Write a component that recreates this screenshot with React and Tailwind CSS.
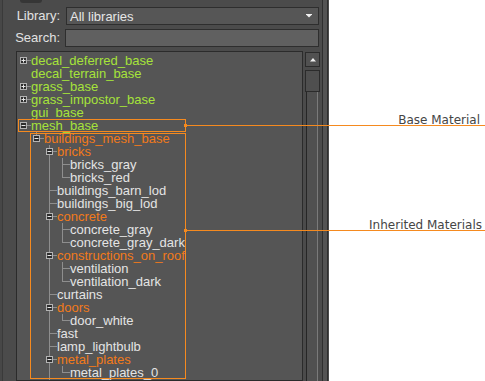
import React from 'react'

const tree = [
  { n: 'decal_deferred_base', c: 'g', closed: true },
  { n: 'decal_terrain_base', c: 'g' },
  { n: 'grass_base', c: 'g', closed: true },
  { n: 'grass_impostor_base', c: 'g', closed: true },
  { n: 'gui_base', c: 'g' },
  {
    n: 'mesh_base', c: 'g', kids: [
      {
        n: 'buildings_mesh_base', c: 'o', kids: [
          { n: 'bricks', c: 'o', kids: [{ n: 'bricks_gray' }, { n: 'bricks_red' }] },
          { n: 'buildings_barn_lod' },
          { n: 'buildings_big_lod' },
          { n: 'concrete', c: 'o', kids: [{ n: 'concrete_gray' }, { n: 'concrete_gray_dark' }] },
          { n: 'constructions_on_roof', c: 'o', kids: [{ n: 'ventilation' }, { n: 'ventilation_dark' }] },
          { n: 'curtains' },
          { n: 'doors', c: 'o', kids: [{ n: 'door_white' }] },
          { n: 'fast' },
          { n: 'lamp_lightbulb' },
          { n: 'metal_plates', c: 'o', kids: [{ n: 'metal_plates_0' }] },
          { n: 'plastic_tiles', c: 'o', closed: true },
        ]
      },
    ]
  },
]

function flatten(nodes, level = 0, guides = [], out = []) {
  nodes.forEach((node, i) => {
    const last = i === nodes.length - 1
    out.push({ node, level, guides, last })
    if (node.kids) flatten(node.kids, level + 1, [...guides, !last], out)
  })
  return out
}

const rows = flatten(tree)

const textColor = { g: 'text-[#a6e33a]', o: 'text-[#f27a1a]', w: 'text-[#e4e4e4]' }

function Expander({ open }) {
  return (
    <svg className="absolute left-[2px] top-[3px]" width="7" height="7" viewBox="0 0 7 7">
      <rect x="0.5" y="0.5" width="6" height="6" fill="#2e2e2e" stroke="#b4b4b4" />
      <line x1="1.5" y1="3.5" x2="5.5" y2="3.5" stroke="#e6e6e6" />
      {!open && <line x1="3.5" y1="1.5" x2="3.5" y2="5.5" stroke="#e6e6e6" />}
    </svg>
  )
}

function Row({ row }) {
  const { node, level, guides, last } = row
  const expandable = node.kids || node.closed
  const cells = []
  for (let k = 0; k < level; k++) {
    cells.push(
      <div key={k} className="relative w-[13px] h-[13px] shrink-0">
        {k >= 1 && guides[k] && <div className="absolute left-[5px] top-0 bottom-0 w-px bg-[#8e8e8e]" />}
      </div>
    )
  }
  return (
    <div className="flex h-[13px]">
      {cells}
      <div className="relative w-[13px] h-[13px] shrink-0">
        {level >= 1 && <div className="absolute left-[5px] top-0 h-[7px] w-px bg-[#8e8e8e]" />}
        {level >= 1 && !last && <div className="absolute left-[5px] top-[6px] bottom-0 w-px bg-[#8e8e8e]" />}
        {(level >= 1 || expandable) && <div className="absolute left-[5px] top-[6px] w-[8px] h-px bg-[#8e8e8e]" />}
        {expandable && <Expander open={!!node.kids} />}
      </div>
      <span className={`text-[13px] leading-[13px] whitespace-nowrap ${textColor[node.c || 'w']}`}>{node.n}</span>
    </div>
  )
}

export default function App() {
  return (
    <div className="relative flex w-[485px] h-[381px] overflow-hidden bg-white" style={{ fontFamily: '"Liberation Sans", Arial, sans-serif' }}>
      {/* editor panel */}
      <div className="flex h-full shrink-0 bg-[#4b4b4b]">
        <div className="w-[2px] bg-[#474747]" />
        <div className="w-px bg-[#3a3a3a]" />
        <div className="relative w-[319px] flex flex-col pt-[7px]">
          <div className="absolute left-[17px] top-0 w-[22px] h-[3px] rounded-b-[3px] bg-[#363636]" />
          <div className="flex items-center h-[18px]">
            <span className="w-[57px] text-right text-[13px] text-[#e2e2e2]">Library:</span>
            <div className="ml-[6px] w-[253px] h-[18px] flex items-center justify-between pl-[3px] pr-[6px] border border-[#2e2e2e] bg-[#565656]">
              <span className="text-[13px] text-[#e6e6e6] leading-none">All libraries</span>
              <svg width="6" height="4" viewBox="0 0 6 4">
                <rect x="0" y="0" width="6" height="1" fill="#f0f0f0" />
                <polygon points="0.5,1 5.5,1 3,3.5" fill="#f0f0f0" />
              </svg>
            </div>
          </div>
          <div className="flex items-center h-[18px] mt-[4px]">
            <span className="w-[57px] text-right text-[13px] text-[#e2e2e2]">Search:</span>
            <div className="ml-[5px] w-[254px] h-[18px] border border-[#2e2e2e] bg-[#606060]" />
          </div>
          <div className="flex flex-1 mt-[4px] min-h-0">
            <div className="ml-[13px] w-[287px] border border-[#2b2b2b] bg-[#555555] pt-[2px] pl-[1px] overflow-hidden">
              {rows.map(r => <Row key={r.node.n} row={r} />)}
            </div>
            <div className="ml-[2px] w-[15px] flex flex-col pt-px">
              <div className="h-[15px] flex items-center justify-center border border-[#2b2b2b] bg-[#515151]">
                <svg width="6" height="4" viewBox="0 0 6 4">
                  <polygon points="3,0 6,3.5 0,3.5" fill="#f0f0f0" />
                </svg>
              </div>
              <div className="mt-[3px] h-[22px] border border-[#2b2b2b] bg-[#4f4f4f]" />
              <div className="flex-1 ml-px w-[12px] border-l border-[#262626] border-r border-r-[#7a7a7a] bg-[#505050]" />
            </div>
          </div>
        </div>
        <div className="w-px bg-[#2e2e2e]" />
        <div className="w-[4px] bg-[#535353]" />
        <div className="w-px bg-[#2e2e2e]" />
        <div className="w-px bg-[#4b4b4b]" />
      </div>
      <div className="flex-1 bg-white" />

      {/* annotations */}
      <div className="absolute left-[18px] top-[119px] w-[168px] h-[13px] border border-[#f58a1f]" />
      <div className="absolute left-[184px] top-[124px] w-[3px] h-[3px] bg-[#f58a1f]" />
      <div className="absolute left-[185px] right-0 top-[125px] h-px bg-[#f58a1f]" />
      <span className="absolute right-[5px] top-[111px] text-[12px] text-[#454545]" style={{ fontFamily: '"DejaVu Sans", sans-serif' }}>Base Material</span>

      <div className="absolute left-[30px] top-[133px] w-[156px] h-[246px] border border-[#f58a1f]" />
      <div className="absolute left-[184px] top-[229px] w-[3px] h-[3px] bg-[#f58a1f]" />
      <div className="absolute left-[185px] right-0 top-[230px] h-px bg-[#f58a1f]" />
      <span className="absolute right-[3px] top-[216px] text-[12px] text-[#454545]" style={{ fontFamily: '"DejaVu Sans", sans-serif' }}>Inherited Materials</span>
    </div>
  )
}
